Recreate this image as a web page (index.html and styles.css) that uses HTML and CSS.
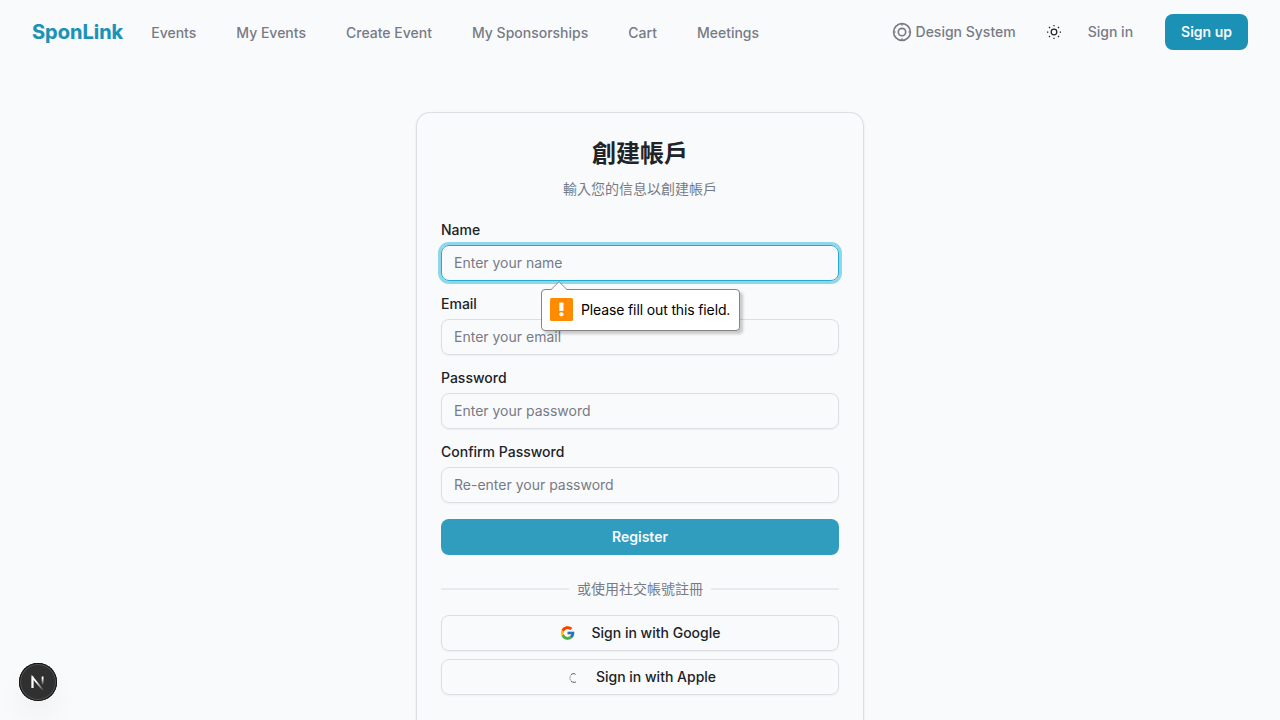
FILE: index.html
```html
<!DOCTYPE html>
<html lang="zh-Hant">
<head>
<meta charset="utf-8">
<title>SponLink</title>
<link rel="stylesheet" href="styles.css">
</head>
<body>
<header class="navbar">
  <a class="logo">SponLink</a>
  <nav class="links">
    <a>Events</a><a>My Events</a><a>Create Event</a><a>My Sponsorships</a><a>Cart</a><a>Meetings</a>
  </nav>
  <div class="actions">
    <a class="design">
      <svg width="20" height="20" viewBox="0 0 20 20" fill="none" stroke="currentColor" stroke-width="1.65"><circle cx="10" cy="10" r="8.4"/><circle cx="10" cy="10" r="3.7"/><path d="M10 1.8v2M10 16.2v2M1.8 10h2M16.2 10h2" stroke-width="1.2"/></svg>
      <span>Design System</span>
    </a>
    <button class="theme" aria-label="Theme">
      <svg width="16" height="16" viewBox="0 0 16 16" fill="none" stroke="currentColor" stroke-width="1.25"><circle cx="8" cy="8" r="2.8"/><path d="M8 1v1.3M8 13.7V15M1 8h1.3M13.7 8H15M3 3l1 1M12 12l1 1M3 13l1-1M12 4l1-1"/></svg>
    </button>
    <a class="signin">Sign in</a>
    <a class="signup">Sign up</a>
  </div>
</header>
<main class="page">
  <section class="card">
    <h1 class="title">創建帳戶</h1>
    <p class="subtitle">輸入您的信息以創建帳戶</p>
    <form class="form">
      <div class="field field-active">
        <label class="label">Name</label>
        <input class="input" placeholder="Enter your name">
        <div class="bubble">
          <svg class="bubble-arrow" width="18" height="10" viewBox="0 0 18 10"><path d="M0 10 1 9 9 1l8 8 1 1z" fill="#fff"/><path d="M1 8.7 9 .7l8 8" fill="none" stroke="#8b8b8b"/></svg>
          <svg width="23" height="23" viewBox="0 0 23 23"><rect width="23" height="23" rx="1.5" fill="#ff8c00"/><path d="M9.3 4.6h4.2v8.3H9.3z" fill="#fff"/><circle cx="11.4" cy="16.3" r="2.1" fill="#fff"/></svg>
          <span class="bubble-text">Please fill out this field.</span>
        </div>
      </div>
      <div class="field">
        <label class="label">Email</label>
        <input class="input" placeholder="Enter your email">
      </div>
      <div class="field">
        <label class="label">Password</label>
        <input class="input" type="password" placeholder="Enter your password">
      </div>
      <div class="field">
        <label class="label">Confirm Password</label>
        <input class="input" type="password" placeholder="Re-enter your password">
      </div>
      <button class="register" type="button">Register</button>
    </form>
    <div class="divider"><span>或使用社交帳號註冊</span></div>
    <div class="social">
      <button class="outline">
        <svg width="16" height="16" viewBox="1.2 0 48 48"><path fill="#FFC107" d="M43.6 20.1H42V20H24v8h11.3C33.7 32.7 29.2 36 24 36c-6.6 0-12-5.4-12-12s5.4-12 12-12c3.1 0 5.8 1.2 8 3l5.700-5.700C34 6.100 29.300 4 24 4 13 4 4 13 4 24s9 20 20 20 20-9 20-20c0-1.300-.1-2.700-.4-3.900z"/><path fill="#FF3D00" d="m6.300 14.700 6.600 4.800C14.700 15.100 19 12 24 12c3.100 0 5.800 1.200 8 3l5.700-5.700C34 6.100 29.300 4 24 4 16.300 4 9.700 8.300 6.300 14.700z"/><path fill="#4CAF50" d="M24 44c5.200 0 9.900-2 13.400-5.200l-6.200-5.200C29.200 35.100 26.700 36 24 36c-5.200 0-9.600-3.300-11.300-8l-6.500 5C9.500 39.600 16.200 44 24 44z"/><path fill="#1976D2" d="M43.600 20.100H24v8h11.300c-.8 2.200-2.200 4.200-4.100 5.600l6.200 5.200C37 39.200 44 34 44 24c0-1.300-.1-2.700-.4-3.900z"/></svg>
        <span>Sign in with Google</span>
      </button>
      <button class="outline">
        <svg width="16" height="16" viewBox="0 0 16 16" fill="none" stroke="#222" stroke-width="1"><path d="M7.300 5.500Q9.500 3.800 11.700 5.500M7.300 12.300Q9.400 14 12 12.900" stroke-dasharray="1.500 .6"/><path d="M6.700 6.500Q5.100 9 6.800 11.800" stroke="#555" stroke-width=".8" stroke-dasharray="1.200 .8"/></svg>
        <span>Sign in with Apple</span>
      </button>
    </div>
  </section>
</main>
<div class="devtools">
  <svg width="38" height="38" viewBox="0 0 38 38" fill="none">
    <defs><linearGradient id="stem" x1="0" y1="12" x2="0" y2="22" gradientUnits="userSpaceOnUse"><stop offset=".35" stop-color="#fff"/><stop offset="1" stop-color="#fff" stop-opacity="0"/></linearGradient><linearGradient id="diagonal" x1="18" y1="18" x2="25" y2="27" gradientUnits="userSpaceOnUse"><stop stop-color="#fff"/><stop offset="1" stop-color="#fff" stop-opacity="0"/></linearGradient></defs>
    <path d="M13.500 25V14.300l10.600 13" stroke="url(#diagonal)" stroke-width="1.800"/><path d="M13.500 25V13.500" stroke="#fff" stroke-width="1.800"/><path d="M23.600 13.500V24.500" stroke="url(#stem)" stroke-width="1.800"/>
  </svg>
</div>
</body>
</html>
```

FILE: styles.css
```css
* { box-sizing: border-box; }
body {
  margin: 0;
  height: 720px;
  overflow: hidden;
  background: #f9fafc;
  color: #202327;
  font: 500 14px/20px Inter, "Noto Sans CJK TC", sans-serif;
}
button, input { font: inherit; color: inherit; }
svg { flex: none; display: block; }
.navbar { display: flex; align-items: center; height: 64px; padding: 0 32px; color: #777b86; }
.logo { font-size: 20px; line-height: 28px; font-weight: 700; color: #1b91b6; -webkit-text-stroke: .2px; }
.links { display: flex; gap: 40px; margin-left: 28px; padding-top: 2px; }
.actions { display: flex; align-items: center; margin-left: auto; }
.design { display: flex; align-items: center; gap: 4px; }
.theme {
  display: flex;
  align-items: center;
  justify-content: center;
  width: 36px;
  height: 36px;
  margin: 0 16px 0 20px;
  padding: 0;
  border: 0;
  background: none;
  color: #202327;
}
.signin { margin-right: 32px; }
.signup { padding: 8px 16px; border-radius: 8px; background: #1b91b6; color: #f9fafc; font-weight: 600; }
.page { display: flex; justify-content: center; padding-top: 48px; }
.card {
  width: 448px;
  height: 608px;
  padding: 24px;
  border: 1px solid #dcdee3;
  border-bottom: 0;
  border-radius: 14px 14px 0 0;
  box-shadow: 0 1px 3px rgba(0, 0, 0, .08);
}
.title { margin: 0; padding-top: 1px; text-align: center; font-size: 24px; line-height: 32px; font-weight: 700; }
.subtitle { margin: 9px 0 0; text-align: center; font-weight: 400; color: #777b86; }
.form { display: flex; flex-direction: column; gap: 16px; margin-top: 24px; }
.field { position: relative; display: flex; flex-direction: column; gap: 8px; }
.label { line-height: 14px; }
.input {
  width: 100%;
  height: 36px;
  padding: 3px 12px 5px;
  border: 1px solid #dcdee3;
  border-radius: 8px;
  outline: 0;
  background: transparent;
  box-shadow: 0 1px 2px rgba(0, 0, 0, .05);
  font-weight: 400;
}
.input::placeholder { color: #777b86; opacity: 1; }
.field-active { z-index: 1; }
.field-active .input { border-color: #22acd3; box-shadow: 0 0 0 3px #90d6e9; }
.bubble {
  position: absolute;
  left: 100px;
  top: 66px;
  display: flex;
  align-items: center;
  gap: 8px;
  width: 199px;
  height: 42px;
  padding: 0 8px 1px;
  border: 1px solid #858585;
  border-radius: 4px;
  background: #fff;
  color: #000;
  font-weight: 400;
  white-space: nowrap;
  box-shadow: 3px 3px 3px rgba(0, 0, 0, .2);
}
.bubble-text { padding-top: 1px; letter-spacing: -.13px; }
.bubble-arrow { position: absolute; left: 8px; top: -9px; }
.register {
  height: 36px;
  padding: 0;
  border: 0;
  border-radius: 8px;
  background: #309cbe;
  color: #f9fafc;
  font-weight: 600;
}
.divider { display: flex; align-items: center; gap: 8px; margin: 24px 0 16px; font-weight: 400; color: #777b86; }
.divider::before, .divider::after { content: ""; flex: 1; height: 2px; background: #eaebee; }
.social { display: flex; flex-direction: column; gap: 8px; }
.outline {
  display: flex;
  align-items: center;
  justify-content: center;
  gap: 16px;
  height: 36px;
  padding: 0;
  border: 1px solid #dcdee3;
  border-radius: 8px;
  background: transparent;
  box-shadow: 0 1px 2px rgba(0, 0, 0, .05);
}
.devtools {
  position: absolute;
  left: 19px;
  top: 663px;
  width: 38px;
  height: 38px;
  border-radius: 50%;
  background: #303030;
  box-shadow: inset 0 0 0 1px #111, inset 0 0 0 2px #515151, 0 16px 32px -8px rgba(0, 0, 0, .12);
}
```
